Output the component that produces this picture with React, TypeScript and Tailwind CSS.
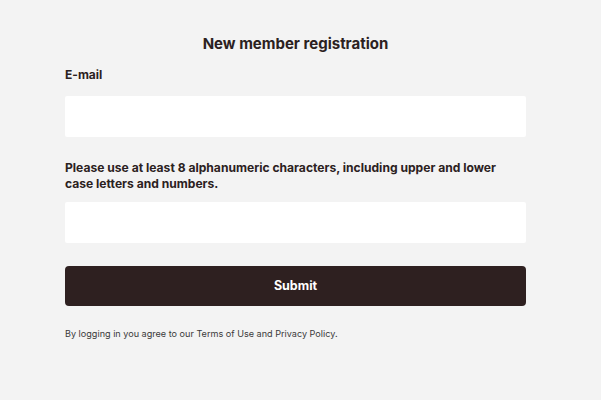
export default function App() {
  return (
    <div className="min-h-[400px] w-full bg-[#f3f3f3] font-['Inter','Liberation_Sans',sans-serif] text-[#2b2121]">
      <div className="ml-[65px] w-[461px] pt-[35px]">
        <h1 className="text-center text-[15px] font-bold leading-[18px]">New member registration</h1>
        <form className="mt-[14px] flex flex-col" onSubmit={(e) => e.preventDefault()}>
          <label className="text-[12px] font-bold leading-[16px]">E-mail</label>
          <input
            type="email"
            className="mt-[13px] h-[41px] w-full rounded-[2px] bg-white px-3 text-[13px] outline-none"
          />
          <label className="mt-[23px] text-[12.1px] font-bold leading-[16px]">
            Please use at least 8 alphanumeric characters, including upper and lower case letters and numbers.
          </label>
          <input
            type="password"
            className="mt-[10px] h-[41px] w-full rounded-[2px] bg-white px-3 text-[13px] outline-none"
          />
          <button
            type="submit"
            className="mt-[23px] h-[40px] w-full rounded-[4px] bg-[#2e2020] text-[12.5px] font-bold text-white"
          >
            Submit
          </button>
        </form>
        <p className="mt-[22px] text-[9.1px] leading-[12px] text-[#3a3a3a]">
          By logging in you agree to our Terms of Use and Privacy Policy.
        </p>
      </div>
    </div>
  );
}
